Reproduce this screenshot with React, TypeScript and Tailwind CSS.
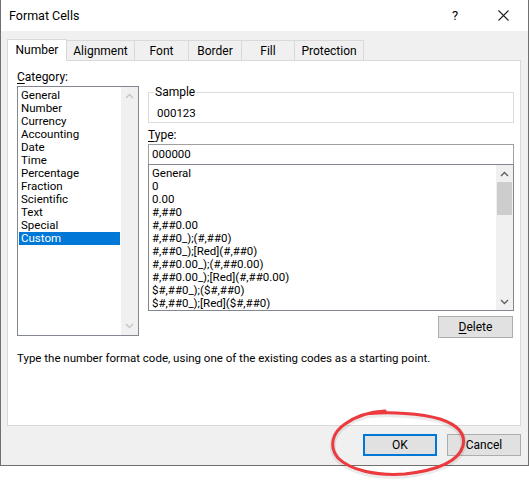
import React from "react";

const categories = [
  "General",
  "Number",
  "Currency",
  "Accounting",
  "Date",
  "Time",
  "Percentage",
  "Fraction",
  "Scientific",
  "Text",
  "Special",
  "Custom",
];

const formats = [
  "General",
  "0",
  "0.00",
  "#,##0",
  "#,##0.00",
  "#,##0_);(#,##0)",
  "#,##0_);[Red](#,##0)",
  "#,##0.00_);(#,##0.00)",
  "#,##0.00_);[Red](#,##0.00)",
  "$#,##0_);($#,##0)",
  "$#,##0_);[Red]($#,##0)",
];

const tabs = [
  { name: "Alignment", w: "w-[68px]" },
  { name: "Font", w: "w-[54px]" },
  { name: "Border", w: "w-[53px]" },
  { name: "Fill", w: "w-[53px]" },
  { name: "Protection", w: "w-[69px]" },
];

function Chevron({ up, color }: { up?: boolean; color: string }) {
  return (
    <svg width="9" height="6" viewBox="0 0 9 6">
      <path
        d={up ? "M1 5 L4.5 1.5 L8 5" : "M1 1 L4.5 4.5 L8 1"}
        fill="none"
        stroke={color}
        strokeWidth="1.4"
      />
    </svg>
  );
}

export default function App() {
  return (
    <div
      className="relative w-[529px] h-[486px] bg-white text-[11.5px] leading-[13px] text-black"
      style={{ fontFamily: "Roboto, 'Noto Sans', sans-serif" }}
    >
      <div className="w-[529px] h-[466px] border-x border-b border-[#707070] bg-[#f0f0f0] flex flex-col">
        {/* title bar */}
        <div className="h-[31px] bg-white flex items-center">
          <span className="ml-[8px] flex-1 text-[12.5px]">Format Cells</span>
          <span className="w-[10px] text-[13px] mr-[36px]">?</span>
          <svg width="11" height="11" viewBox="0 0 11 11" className="mr-[19px]">
            <path d="M0.5 0.5 L10.5 10.5 M10.5 0.5 L0.5 10.5" stroke="#222" strokeWidth="1.1" />
          </svg>
        </div>

        {/* tabs */}
        <div className="flex items-end ml-[6px] mt-[7px] h-[22px]">
          <div className="w-[60px] h-[22px] bg-white border-x border-t border-[#d9d9d9] flex items-center justify-center -mb-px relative z-10 text-[12px]">
            Number
          </div>
          {tabs.map((t) => (
            <div
              key={t.name}
              className={`${t.w} h-[20px] border-t border-r border-[#d9d9d9] flex items-center justify-center pt-[1px] text-[12px]`}
            >
              {t.name}
            </div>
          ))}
        </div>

        {/* panel */}
        <div className="ml-[6px] w-[514px] h-[366px] bg-white border border-[#d9d9d9] flex flex-col">
          <div className="flex">
            {/* category column */}
            <div className="ml-[9px] w-[122px] flex flex-col">
              <div className="h-[16px] mt-[8px] leading-[16px] text-[12px]">
                <span className="underline underline-offset-2">C</span>ategory:
              </div>
              <div className="mt-[1px] h-[250px] border border-[#828790] flex">
                <div className="flex-1 pt-[2px] pl-[1px] mr-[1px]">
                  {categories.map((c) => (
                    <div
                      key={c}
                      className={`h-[13px] pl-[2px] ${c === "Custom" ? "bg-[#0078d7] text-white" : ""}`}
                    >
                      {c}
                    </div>
                  ))}
                </div>
                <div className="w-[17px] bg-[#f0f0f0] flex flex-col items-center justify-between py-[6px]">
                  <Chevron up color="#c6c6c6" />
                  <Chevron color="#c6c6c6" />
                </div>
              </div>
            </div>

            {/* right column */}
            <div className="ml-[9px] w-[366px] flex flex-col">
              <fieldset className="mt-[23px] border border-[#dcdcdc] pb-[1px]">
                <legend className="ml-[5px] px-[1px] leading-[16px] text-[12px]">Sample</legend>
                <div className="pl-[8px] pt-[5px] leading-[16px]">000123</div>
              </fieldset>
              <div className="mt-[4px] h-[16px] leading-[16px] text-[12px]">
                <span className="underline underline-offset-2">T</span>ype:
              </div>
              <div className="mt-[1px] h-[20px] border border-[#a0a0a0] border-b-0 flex items-center pl-[3px]">
                000000
              </div>
              <div className="h-[147px] border border-[#828790] flex">
                <div className="flex-1 pt-[2px] pl-[3px]">
                  {formats.map((f) => (
                    <div key={f} className="h-[13px]">
                      {f}
                    </div>
                  ))}
                </div>
                <div className="w-[17px] bg-[#f0f0f0] flex flex-col items-center">
                  <div className="h-[17px] flex items-center">
                    <Chevron up color="#606060" />
                  </div>
                  <div className="w-[15px] h-[33px] bg-[#cdcdcd]" />
                  <div className="flex-1" />
                  <div className="h-[17px] flex items-center">
                    <Chevron color="#606060" />
                  </div>
                </div>
              </div>
              <div className="flex justify-end mt-[5px]">
                <button className="w-[75px] h-[22px] bg-[#e1e1e1] border border-[#adadad] mr-[1px] text-[12px]">
                  <span className="underline underline-offset-2">D</span>elete
                </button>
              </div>
            </div>
          </div>
          <div className="ml-[9px] mt-[14px]">
            Type the number format code, using one of the existing codes as a starting point.
          </div>
        </div>

        {/* footer */}
        <div className="flex justify-end mt-[8px] mr-[7px] gap-[10px] text-[12px]">
          <button className="w-[74px] h-[22px] bg-[#e1e1e1] border-2 border-[#0078d7]">OK</button>
          <button className="w-[74px] h-[22px] bg-[#e1e1e1] border border-[#adadad]">Cancel</button>
        </div>
      </div>

      {/* red annotation loop */}
      <svg
        className="absolute left-0 top-0 pointer-events-none"
        width="529"
        height="486"
        viewBox="0 0 529 486"
      >
        <path
          d="M370 413.5 C 390 412, 420 413, 440 419 C 458 425, 466 434, 463 446 C 459 460, 440 470, 405 474 C 375 476, 350 470, 338 458 C 328 446, 333 432, 345 424 C 356 416, 368 412, 385 411"
          fill="none"
          stroke="#000"
          strokeOpacity="0.08"
          strokeWidth="6"
          strokeLinecap="round"
          transform="translate(0 1.5)"
        />
        <path
          d="M370 413.5 C 390 412, 420 413, 440 419 C 458 425, 466 434, 463 446 C 459 460, 440 470, 405 474 C 375 476, 350 470, 338 458 C 328 446, 333 432, 345 424 C 356 416, 368 412, 385 411"
          fill="none"
          stroke="#ec3a3e"
          strokeWidth="3"
          strokeLinecap="round"
        />
      </svg>
    </div>
  );
}
